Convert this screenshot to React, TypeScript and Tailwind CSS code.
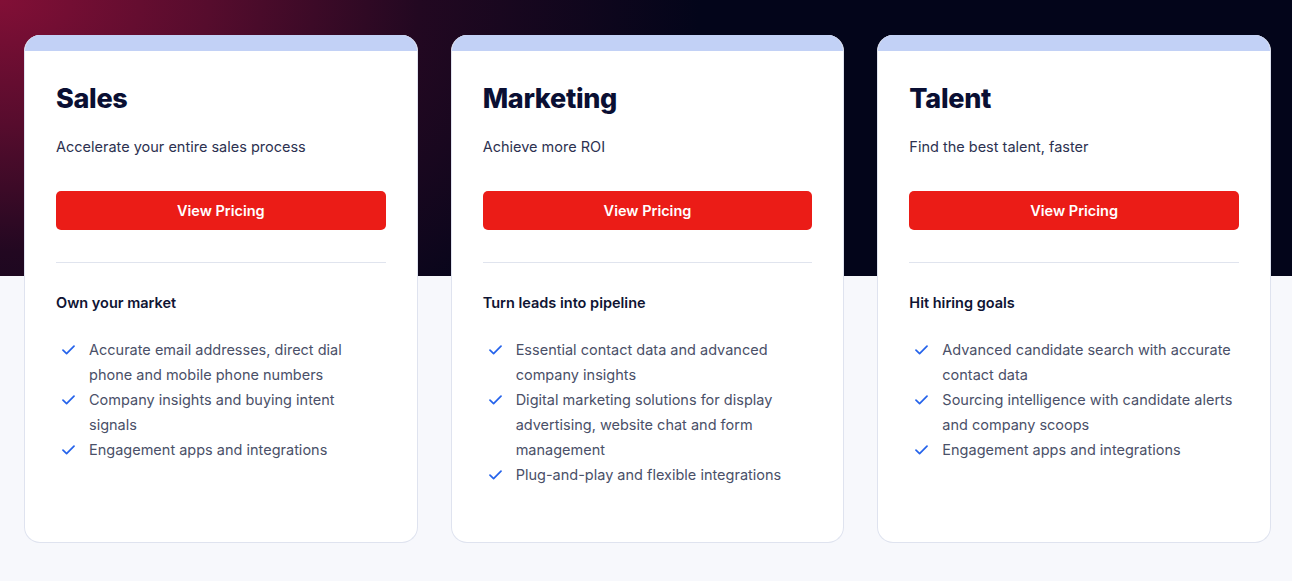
import React from "react";

const Check = () => (
  <svg width="13" height="10" viewBox="0 0 13 10" fill="none" className="shrink-0 mt-[8px]">
    <path d="M1 5.2 L4.6 8.6 L12 1.2" stroke="#2563eb" strokeWidth="1.7" strokeLinecap="round" strokeLinejoin="round" />
  </svg>
);

type Card = { title: string; sub: string; heading: string; items: string[] };

const cards: Card[] = [
  {
    title: "Sales",
    sub: "Accelerate your entire sales process",
    heading: "Own your market",
    items: [
      "Accurate email addresses, direct dial phone and mobile phone numbers",
      "Company insights and buying intent signals",
      "Engagement apps and integrations",
    ],
  },
  {
    title: "Marketing",
    sub: "Achieve more ROI",
    heading: "Turn leads into pipeline",
    items: [
      "Essential contact data and advanced company insights",
      "Digital marketing solutions for display advertising, website chat and form management",
      "Plug-and-play and flexible integrations",
    ],
  },
  {
    title: "Talent",
    sub: "Find the best talent, faster",
    heading: "Hit hiring goals",
    items: [
      "Advanced candidate search with accurate contact data",
      "Sourcing intelligence with candidate alerts and company scoops",
      "Engagement apps and integrations",
    ],
  },
];

export default function App() {
  return (
    <div
      className="w-[1292px] h-[581px] overflow-hidden bg-[#f7f8fc] bg-no-repeat [background-image:radial-gradient(ellipse_700px_420px_at_0_0,#820f36_0%,#560c2d_30%,#220821_60%,#03051a_100%)] [background-size:100%_276px]"
      style={{ fontFamily: "Inter, 'Noto Sans', sans-serif" }}
    >
      <div className="grid grid-cols-3 gap-[33px] pl-6 pr-[21px] pt-[35px]">
        {cards.map((c) => (
          <div
            key={c.title}
            className="h-[508px] bg-white rounded-2xl border border-[#dfe3ef] border-t-0 overflow-hidden flex flex-col"
          >
            <div className="h-4 bg-[#c2d1f6] shrink-0" />
            <div className="px-[31px] pt-[32px] flex flex-col">
              <h2 className="text-[27px] leading-[32px] font-extrabold text-[#0a0f33] tracking-[-0.3px]">{c.title}</h2>
              <p className="mt-[20px] text-[14.5px] leading-6 text-[#2c3150]">{c.sub}</p>
              <button className="mt-8 h-[39px] w-full rounded-[5px] bg-[#eb1c17] text-white text-[14.5px] font-semibold">
                View Pricing
              </button>
              <div className="mt-8 h-px bg-[#e0e4ee]" />
              <h3 className="mt-[28px] text-[14.5px] leading-6 font-semibold text-[#0f1433]">{c.heading}</h3>
              <ul className="mt-[22px] flex flex-col">
                {c.items.map((it) => (
                  <li key={it} className="flex gap-[14px] pl-[6px] text-[14.5px] leading-[25px] text-[#4a5068]">
                    <Check />
                    <span>{it}</span>
                  </li>
                ))}
              </ul>
            </div>
          </div>
        ))}
      </div>
    </div>
  );
}
